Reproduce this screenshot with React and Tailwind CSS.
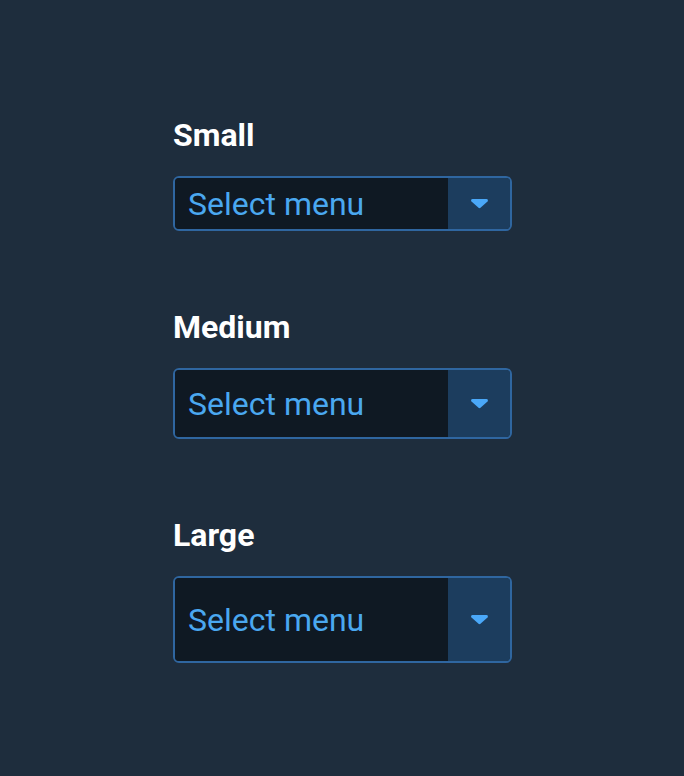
import { useState } from 'react';

const sizes = [
  { label: 'Small', box: 'h-[55px]' },
  { label: 'Medium', box: 'h-[71px]' },
  { label: 'Large', box: 'h-[87px]' },
];

const Caret = () => (
  <svg width="19" height="11" viewBox="0 0 19 11" fill="none">
    <path d="M2.5 1h14c1.3 0 1.9 1.5 1 2.4l-7 6.4c-.6.5-1.4.5-2 0l-7-6.4C.6 2.5 1.2 1 2.5 1z" fill="#4aa8f8" />
  </svg>
);

const SelectMenu = ({ box }) => {
  const [value] = useState('Select menu');
  return (
    <div className={`flex w-[339px] ${box} rounded-md border-2 border-[#2f66a0] overflow-hidden`}>
      <div className="flex-1 flex items-center bg-[#0f1923] pl-[13px] text-[32px] text-[#4aa8f0]">
        {value}
      </div>
      <div className="w-[62px] flex items-center justify-center bg-[#1c3d5e]">
        <Caret />
      </div>
    </div>
  );
};

export default function App() {
  return (
    <div className="min-h-screen bg-[#1e2d3d] pl-[173px] pt-[116px] font-['Roboto',sans-serif]">
      <div className="flex flex-col gap-[77px]">
        {sizes.map(s => (
          <div key={s.label}>
            <div className="text-[32px] font-bold text-white leading-[38px] mb-[22px]">{s.label}</div>
            <SelectMenu box={s.box} />
          </div>
        ))}
      </div>
    </div>
  );
}
